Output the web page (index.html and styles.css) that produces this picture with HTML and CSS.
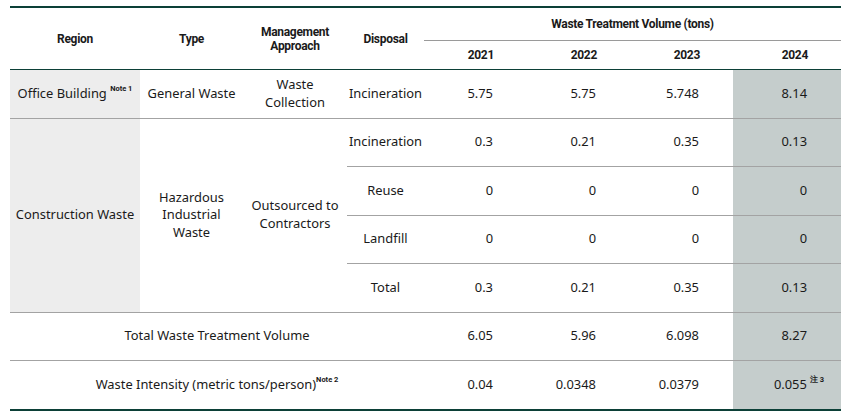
FILE: index.html
```html
<!DOCTYPE html>
<html lang="en">
<head>
<meta charset="utf-8">
<title>Waste Treatment Volume</title>
<link rel="stylesheet" href="styles.css">
</head>
<body>
<table class="waste">
  <colgroup>
    <col class="c-region"><col class="c-type"><col class="c-mgmt"><col class="c-disp">
    <col class="c-year"><col class="c-year"><col class="c-year"><col class="c-last">
  </colgroup>
  <thead>
    <tr class="h1">
      <th rowspan="2">Region</th>
      <th rowspan="2">Type</th>
      <th rowspan="2" class="two">Management<br>Approach</th>
      <th rowspan="2">Disposal</th>
      <th colspan="4" class="group">Waste Treatment Volume (tons)</th>
    </tr>
    <tr class="h2">
      <th class="yr">2021</th>
      <th class="yr">2022</th>
      <th class="yr">2023</th>
      <th class="yr">2024</th>
    </tr>
  </thead>
  <tbody>
    <tr>
      <td class="region">Office Building <sup class="note">Note 1</sup></td>
      <td>General Waste</td>
      <td class="two">Waste<br>Collection</td>
      <td>Incineration</td>
      <td class="num">5.75</td>
      <td class="num">5.75</td>
      <td class="num">5.748</td>
      <td class="num hl">8.14</td>
    </tr>
    <tr>
      <td class="region" rowspan="4">Construction Waste</td>
      <td rowspan="4" class="two">Hazardous<br>Industrial<br>Waste</td>
      <td rowspan="4" class="two">Outsourced to<br>Contractors</td>
      <td>Incineration</td>
      <td class="num">0.3</td>
      <td class="num">0.21</td>
      <td class="num">0.35</td>
      <td class="num hl">0.13</td>
    </tr>
    <tr>
      <td>Reuse</td>
      <td class="num">0</td>
      <td class="num">0</td>
      <td class="num">0</td>
      <td class="num hl">0</td>
    </tr>
    <tr>
      <td>Landfill</td>
      <td class="num">0</td>
      <td class="num">0</td>
      <td class="num">0</td>
      <td class="num hl">0</td>
    </tr>
    <tr>
      <td>Total</td>
      <td class="num">0.3</td>
      <td class="num">0.21</td>
      <td class="num">0.35</td>
      <td class="num hl">0.13</td>
    </tr>
    <tr>
      <td colspan="4">Total Waste Treatment Volume</td>
      <td class="num">6.05</td>
      <td class="num">5.96</td>
      <td class="num">6.098</td>
      <td class="num hl">8.27</td>
    </tr>
    <tr class="last">
      <td colspan="4">Waste Intensity (metric tons/person)<sup class="note">Note 2</sup></td>
      <td class="num">0.04</td>
      <td class="num">0.0348</td>
      <td class="num">0.0379</td>
      <td class="num hl">0.055<sup class="note note-r">注 3</sup></td>
    </tr>
  </tbody>
</table>
</body>
</html>
```
FILE: styles.css
```css
html, body {
  margin: 0;
  padding: 0;
  background: #ffffff;
}
body {
  padding: 6px 4px 0 10px;
}
.waste {
  border-collapse: collapse;
  table-layout: fixed;
  width: 831px;
  color: #1a1a1a;
  font-family: "Noto Sans", "Open Sans", sans-serif;
  font-size: 12.9px;
}
.c-region { width: 130px; }
.c-type { width: 103px; }
.c-mgmt { width: 104px; }
.c-disp { width: 77px; }
.c-year { width: 103px; }
.c-last { width: 108px; }

thead tr.h1 th {
  border-top: 2px solid #0c4037;
}
.waste th {
  font-family: Roboto, "Liberation Sans", sans-serif;
  font-weight: 700;
  font-size: 12px;
  letter-spacing: -0.3px;
  padding: 0;
  text-align: center;
  vertical-align: middle;
  border-bottom: 1px solid #0c4037;
}
.waste th.two { line-height: 14px; }
.waste th.group {
  height: 32px;
  border-bottom: 1px solid #9a9a9a;
}
.waste tr.h2 th { height: 28px; }
.waste th.yr {
  text-align: right;
  padding-right: 33px;
}
.waste td {
  height: 47.5px;
  padding: 0;
  text-align: center;
  vertical-align: middle;
  border-bottom: 1px solid #a3a3a3;
  line-height: 17.6px;
}
.waste td.region { background: #ededed; }
.waste td.num {
  text-align: right;
  padding-right: 34px;
}
.waste td.hl { background: #c5cdcc; }
.waste tr.last td { border-bottom: 2px solid #0c4037; }
.note {
  font-family: Roboto, "Liberation Sans", sans-serif;
  font-weight: 700;
  font-size: 7.5px;
  vertical-align: 7px;
  line-height: 0;
}
.note-r {
  margin-left: 3px;
  margin-right: -17px;
}
```
